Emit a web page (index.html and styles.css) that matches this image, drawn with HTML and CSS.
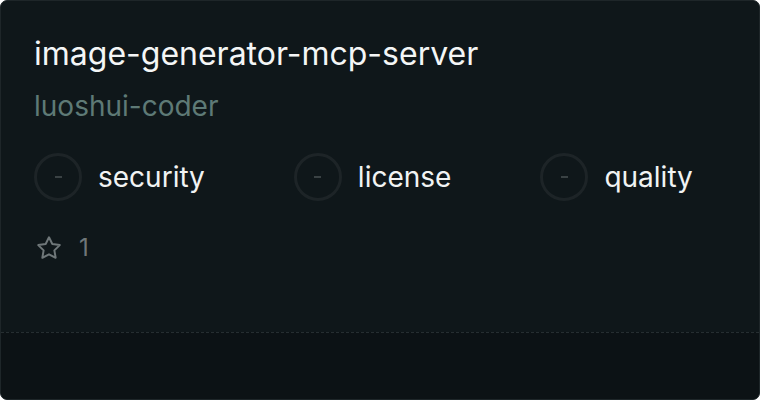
FILE: index.html
```html
<!DOCTYPE html>
<html>
<head>
<meta charset="utf-8">
<link rel="stylesheet" href="styles.css">
</head>
<body>
<div class="card">
  <div class="main">
    <div class="title">image-generator-mcp-server</div>
    <div class="author">luoshui-coder</div>
    <div class="badges">
      <div class="badge"><span class="ring"><span class="dash"></span></span><span class="label">security</span></div>
      <div class="badge"><span class="ring"><span class="dash"></span></span><span class="label">license</span></div>
      <div class="badge"><span class="ring"><span class="dash"></span></span><span class="label">quality</span></div>
    </div>
    <div class="stars">
      <svg class="star" width="28" height="28" viewBox="0 0 24 24" fill="none" stroke="currentColor" stroke-width="1.7" stroke-linejoin="round"><path d="M12 2.8l2.85 5.78 6.38.93-4.62 4.5 1.09 6.35L12 17.36l-5.7 3 1.09-6.35-4.62-4.5 6.38-.93z"/></svg>
      <span class="count">1</span>
    </div>
  </div>
  <div class="footer"></div>
</div>
</body>
</html>
```
FILE: styles.css
```css
html, body { margin: 0; padding: 0; background: #ffffff; }
body { font-family: Inter, "Noto Sans", sans-serif; }
.card {
  width: 760px; height: 400px; box-sizing: border-box;
  border: 1px solid #1e2629; border-radius: 7px;
  background: #0f171a; overflow: hidden;
  display: flex; flex-direction: column;
}
.main { flex: 1; padding: 33px 33px 0 33px; }
.title { color: #f4f6f6; font-size: 32px; line-height: 40px; }
.author { color: #5e7a76; font-size: 28px; line-height: 36px; margin-top: 14px; }
.badges { display: flex; gap: 89px; margin-top: 29px; align-items: center; }
.badge { display: flex; align-items: center; gap: 16px; }
.ring {
  width: 48px; height: 48px; box-sizing: border-box; border-radius: 50%;
  border: 3px solid #1d2427; display: flex; align-items: center; justify-content: center;
}
.dash { width: 7px; height: 2px; background: #3a4244; }
.label { color: #f1f3f3; font-size: 28px; line-height: 36px; }
.stars { display: flex; align-items: center; gap: 16px; margin-top: 33px; color: #6f7779; padding-left: 1px; }
.count { font-size: 24px; line-height: 28px; color: #6f7779; }
.footer { height: 66px; border-top: 1px dashed #262e31; background: #0c1215; flex: none; }
```
